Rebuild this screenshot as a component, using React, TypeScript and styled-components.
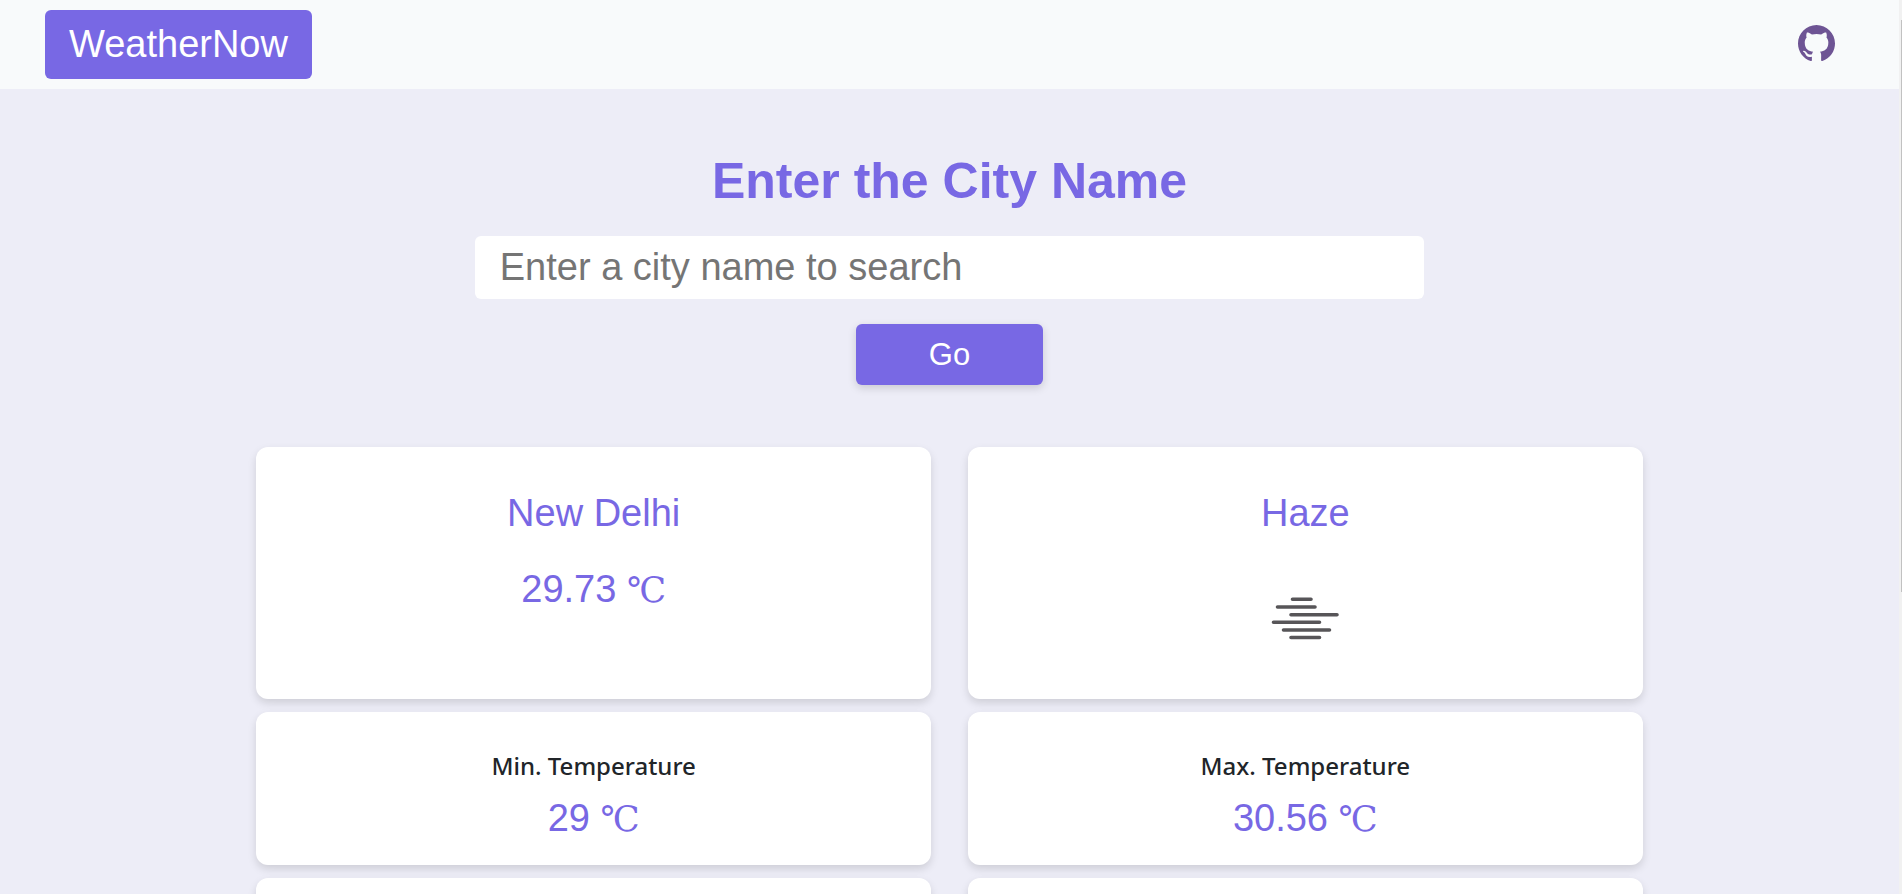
import React from "react";
import styled, { createGlobalStyle } from "styled-components";

const GlobalStyle = createGlobalStyle`
  *, *::before, *::after { box-sizing: border-box; }
  body {
    margin: 0;
    background: #ededf7;
    color: #212529;
    font-family: "Liberation Sans", Arial, sans-serif;
  }
`;

const Page = styled.div`
  height: 100vh;
  overflow: hidden;
  padding-right: 3px;
`;

const Navbar = styled.header`
  display: flex;
  align-items: center;
  justify-content: space-between;
  padding: 10px 64px 10px 45px;
  background: #f8fafb;
`;

const Brand = styled.a`
  padding: 12px 24px;
  border-radius: 6px;
  background: #7868e4;
  color: #fff;
  font-size: 38px;
  line-height: 45px;
  text-decoration: none;
`;

const RepoLink = styled.a`
  display: flex;
  padding-bottom: 2px;
  color: #6e5494;
`;

const Main = styled.main`
  display: flex;
  flex-direction: column;
  align-items: center;
  padding-top: 63px;
`;

const SearchForm = styled.form`
  display: flex;
  flex-direction: column;
  align-items: center;
  width: 50%;
  margin-bottom: 62px;
`;

const SearchLabel = styled.label`
  margin-bottom: 26px;
  color: #7868e4;
  font-size: 50px;
  font-weight: 700;
  line-height: 58px;
`;

const SearchInput = styled.input`
  width: 100%;
  height: 63px;
  margin-bottom: 25px;
  padding: 0 25px;
  border: 0;
  border-radius: 6px;
  background: #fff;
  font-family: inherit;
  font-size: 38px;
  &::placeholder { color: #757575; }
`;

const GoButton = styled.button`
  width: 187px;
  height: 61px;
  border: 0;
  border-radius: 6px;
  background: #7868e4;
  box-shadow: 0 3px 8px rgba(0, 0, 0, 0.15);
  color: #fff;
  font-family: inherit;
  font-size: 31px;
`;

const Grid = styled.section`
  display: grid;
  grid-template-columns: 1fr 1fr;
  gap: 13px 37px;
  width: 73%;
`;

const Card = styled.article<{ $tall?: boolean }>`
  display: flex;
  flex-direction: column;
  align-items: center;
  gap: ${(p) => (p.$tall ? 30 : 14)}px;
  min-height: ${(p) => (p.$tall ? 252 : 153)}px;
  padding-top: ${(p) => (p.$tall ? 43 : 39)}px;
  border-radius: 12px;
  background: #fff;
  box-shadow: 0 4px 8px rgba(0, 0, 0, 0.13);
`;

const Value = styled.p`
  margin: 0;
  color: #7868e4;
  font-size: 38px;
  line-height: 46px;
`;

const Unit = styled.span`
  font-family: "DejaVu Serif", serif;
  font-size: 35px;
  line-height: 1;
`;

const Label = styled.h2`
  margin: 0;
  font-family: "Noto Sans", sans-serif;
  font-size: 24px;
  font-weight: 500;
  line-height: 30px;
`;

const ScrollTrack = styled.div`
  position: fixed;
  top: 0;
  right: 0;
  bottom: 0;
  width: 3px;
  background: #f1f1f1;
`;

const ScrollThumb = styled.div`
  width: 1px;
  height: 64%;
  margin: 20px 0 0 auto;
  background: #c1c1c1;
`;

const GithubMark = () => (
  <svg width="37" height="37" viewBox="0 0 16 16" fill="currentColor" aria-hidden="true">
    <path d="M8 0C3.58 0 0 3.58 0 8c0 3.54 2.29 6.53 5.47 7.59.4.07.55-.17.55-.38 0-.19-.01-.82-.01-1.49-2.01.37-2.53-.49-2.69-.94-.09-.23-.48-.94-.82-1.13-.28-.15-.68-.52-.01-.53.63-.01 1.08.58 1.23.82.72 1.21 1.87.87 2.33.66.07-.52.28-.87.51-1.07-1.78-.2-3.64-.89-3.64-3.95 0-.87.31-1.59.82-2.15-.08-.2-.36-1.02.08-2.12 0 0 .67-.21 2.2.82.64-.18 1.32-.27 2-.27s1.36.09 2 .27c1.53-1.04 2.2-.82 2.2-.82.44 1.1.16 1.92.08 2.12.51.56.82 1.27.82 2.15 0 3.07-1.87 3.75-3.65 3.95.29.25.54.73.54 1.48 0 1.07-.01 1.93-.01 2.2 0 .21.15.46.55.38A8.01 8.01 0 0 0 16 8c0-4.42-3.58-8-8-8z" />
  </svg>
);

const HazeIcon = () => (
  <svg width="124" height="104" viewBox="0 10 124 104" fill="none" stroke="#575558" strokeWidth="3.6" strokeLinecap="round" role="img" aria-label="Haze">
    <path d="M49.5 43.3H68M34.5 51H72M48 58.8H94M30.5 66.3H76.5M40.5 74H86.5M48 81.5H76.5" />
  </svg>
);

const readings = [
  { label: "Min. Temperature", value: "29" },
  { label: "Max. Temperature", value: "30.56" },
];

export default function App() {
  return (
    <Page>
      <GlobalStyle />
      <Navbar>
        <Brand href="#">WeatherNow</Brand>
        <RepoLink href="#" aria-label="GitHub"><GithubMark /></RepoLink>
      </Navbar>
      <Main>
        <SearchForm onSubmit={(e: React.FormEvent) => e.preventDefault()}>
          <SearchLabel htmlFor="city">Enter the City Name</SearchLabel>
          <SearchInput id="city" type="text" placeholder="Enter a city name to search" />
          <GoButton type="submit">Go</GoButton>
        </SearchForm>
        <Grid>
          <Card $tall>
            <Value>New Delhi</Value>
            <Value>29.73 <Unit>℃</Unit></Value>
          </Card>
          <Card $tall>
            <Value>Haze</Value>
            <HazeIcon />
          </Card>
          {readings.map((r) => (
            <Card key={r.label}>
              <Label>{r.label}</Label>
              <Value>{r.value} <Unit>℃</Unit></Value>
            </Card>
          ))}
          <Card />
          <Card />
        </Grid>
      </Main>
      <ScrollTrack aria-hidden="true"><ScrollThumb /></ScrollTrack>
    </Page>
  );
}
